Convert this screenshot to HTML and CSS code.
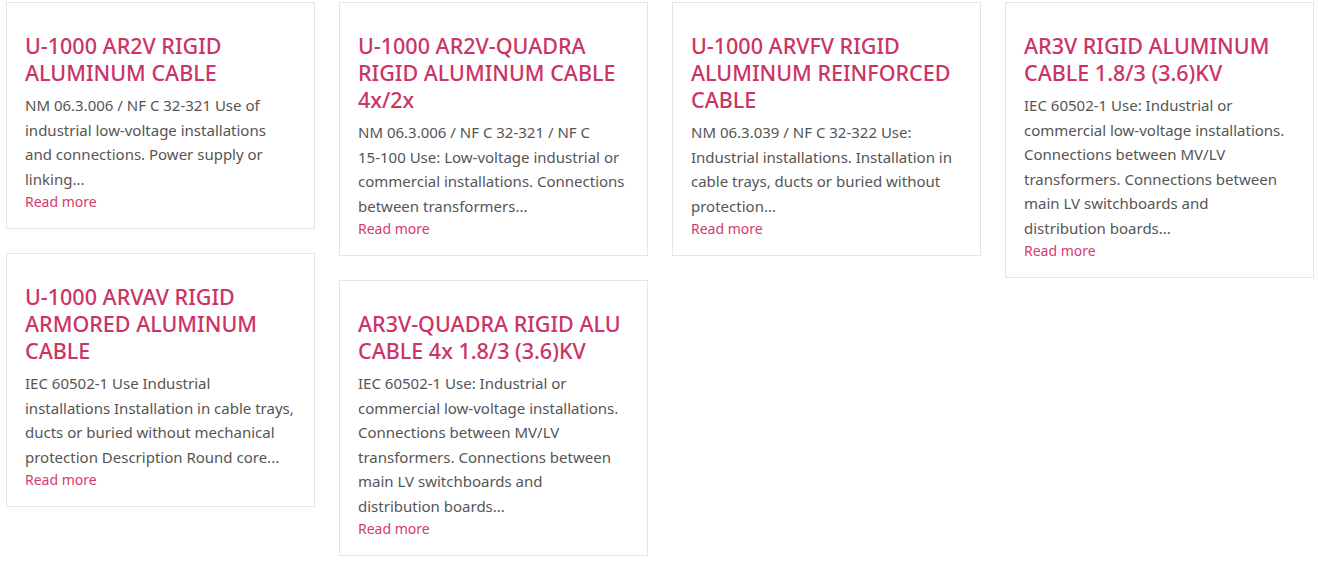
FILE: index.html
```html
<!DOCTYPE html>
<html lang="en">
<head>
<meta charset="utf-8">
<title>Cables</title>
<link rel="stylesheet" href="styles.css">
</head>
<body>
<div class="grid">
  <div class="col">
    <article class="card">
      <h2 class="title">U-1000 AR2V RIGID ALUMINUM CABLE</h2>
      <p class="desc">NM 06.3.006 / NF C 32-321 Use of industrial low-voltage installations and connections. Power supply or linking...</p>
      <a class="more" href="#">Read more</a>
    </article>
    <article class="card">
      <h2 class="title">U-1000 ARVAV RIGID ARMORED ALUMINUM CABLE</h2>
      <p class="desc">IEC 60502-1 Use Industrial installations Installation in cable trays, ducts or buried without mechanical protection Description Round core...</p>
      <a class="more" href="#">Read more</a>
    </article>
  </div>
  <div class="col">
    <article class="card">
      <h2 class="title">U-1000 AR2V-QUADRA RIGID ALUMINUM CABLE 4x/2x</h2>
      <p class="desc">NM 06.3.006 / NF C 32-321 / NF C 15&#8209;100 Use: Low-voltage industrial or commercial installations. Connections between transformers...</p>
      <a class="more" href="#">Read more</a>
    </article>
    <article class="card">
      <h2 class="title">AR3V-QUADRA RIGID ALU CABLE 4x 1.8/3 (3.6)KV</h2>
      <p class="desc">IEC 60502-1 Use: Industrial or commercial low-voltage installations. Connections between MV/LV transformers. Connections between main LV switchboards and distribution boards...</p>
      <a class="more" href="#">Read more</a>
    </article>
  </div>
  <div class="col">
    <article class="card">
      <h2 class="title">U-1000 ARVFV RIGID ALUMINUM REINFORCED CABLE</h2>
      <p class="desc">NM 06.3.039 / NF C 32-322 Use: Industrial installations. Installation in cable trays, ducts or buried without protection...</p>
      <a class="more" href="#">Read more</a>
    </article>
  </div>
  <div class="col">
    <article class="card">
      <h2 class="title">AR3V RIGID ALUMINUM CABLE 1.8/3 (3.6)KV</h2>
      <p class="desc">IEC 60502-1 Use: Industrial or commercial low-voltage installations. Connections between MV/LV transformers. Connections between main LV switchboards and distribution boards...</p>
      <a class="more" href="#">Read more</a>
    </article>
  </div>
</div>
</body>
</html>
```
FILE: styles.css
```css
html, body {
  margin: 0;
  background: #ffffff;
}
body {
  font-family: "Noto Sans", "Open Sans", sans-serif;
  color: #555555;
}
.grid {
  display: flex;
  align-items: flex-start;
  gap: 24px;
  padding: 2px 0 0 6px;
}
.col {
  width: 309px;
  display: flex;
  flex-direction: column;
  gap: 24px;
}
.card {
  border: 1px solid #e5e5e5;
  padding: 29px 20px 16px 18px;
}
.title {
  margin: 0;
  font-size: 21.5px;
  line-height: 27px;
  font-weight: 500;
  color: #cc3366;
}
.desc {
  margin: 7px 0 0 0;
  font-size: 15px;
  line-height: 24.5px;
  color: #555555;
}
.more {
  display: block;
  margin-top: 1px;
  font-size: 14px;
  line-height: 20px;
  color: #d63a6e;
  text-decoration: none;
}
```
